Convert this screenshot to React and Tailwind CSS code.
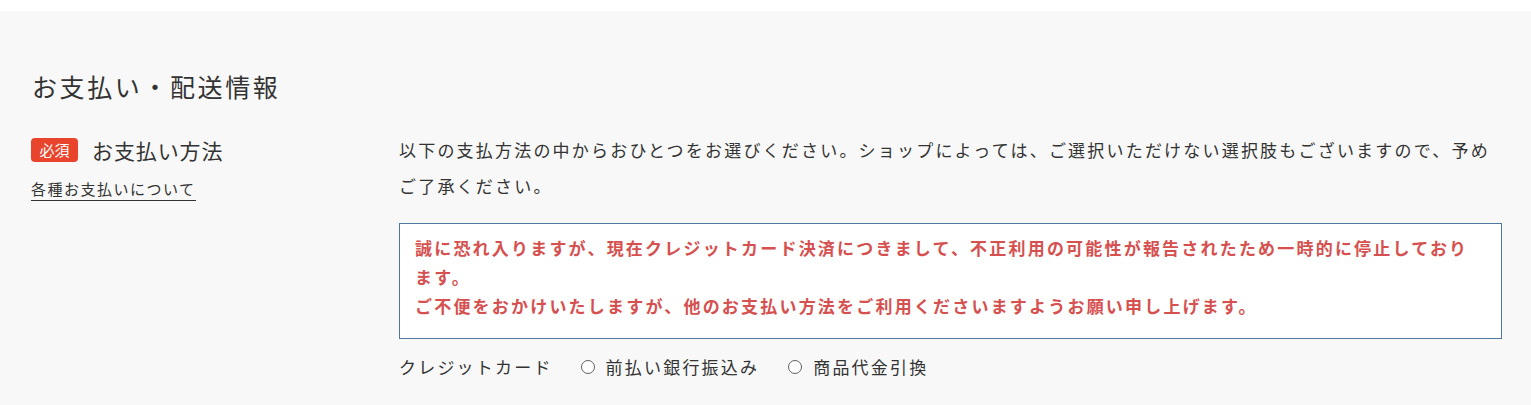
import React from 'react';

const Radio = ({ label }) => (
  <label className="flex items-center">
    <span className="w-[14px] h-[14px] rounded-full border-[1.5px] border-[#5f5f5f] bg-white shrink-0" />
    <span className="ml-[11px]">{label}</span>
  </label>
);

export default function App() {
  return (
    <div className="min-h-[405px] bg-white pt-[11px] text-[#333]" style={{ fontFamily: '"Noto Sans CJK JP", "Noto Sans", sans-serif' }}>
      <section className="bg-[#f8f8f8] min-h-[394px] pt-[57px] pl-[31px] pr-[29px]">
        <h2 className="text-[25px] leading-[36px] tracking-[2.6px] pl-[1px] font-normal">
          お支払い・配送情報
        </h2>

        <div className="flex mt-[28px]">
          <div className="w-[368px] shrink-0 pt-[6px]">
            <div className="flex items-center">
              <span className="w-[47px] h-[24px] rounded-[4px] bg-[#e8452c] text-white text-[15px] leading-[24px] flex items-center justify-center">
                必須
              </span>
              <span className="ml-[14px] text-[21px] leading-[24px] tracking-[0.9px]">お支払い方法</span>
            </div>
            <a className="inline-block mt-[16px] text-[15px] leading-[22px] tracking-[1.5px] border-b border-[#333]">
              各種お支払いについて
            </a>
          </div>

          <div className="flex-1 min-w-0">
            <p className="text-[17px] leading-[36px] tracking-[2.2px]">
              以下の支払方法の中からおひとつをお選びください。ショップによっては、ご選択いただけない選択肢もございますので、予めご了承ください。
            </p>

            <div className="mt-[19px] border border-[#4f78a3] bg-white pt-[9px] pb-[18px] px-[15px] text-[#d6504f] font-bold text-[17px] leading-[29px] tracking-[2.2px]">
              <p>誠に恐れ入りますが、現在クレジットカード決済につきまして、不正利用の可能性が報告されたため一時的に停止しております。</p>
              <p>ご不便をおかけいたしますが、他のお支払い方法をご利用くださいますようお願い申し上げます。</p>
            </div>

            <div className="mt-[10px] flex items-center text-[17px] leading-[36px] tracking-[2.2px]">
              <span>クレジットカード</span>
              <div className="ml-[28px]">
                <Radio label="前払い銀行振込み" />
              </div>
              <div className="ml-[29px]">
                <Radio label="商品代金引換" />
              </div>
            </div>
          </div>
        </div>
      </section>
    </div>
  );
}
